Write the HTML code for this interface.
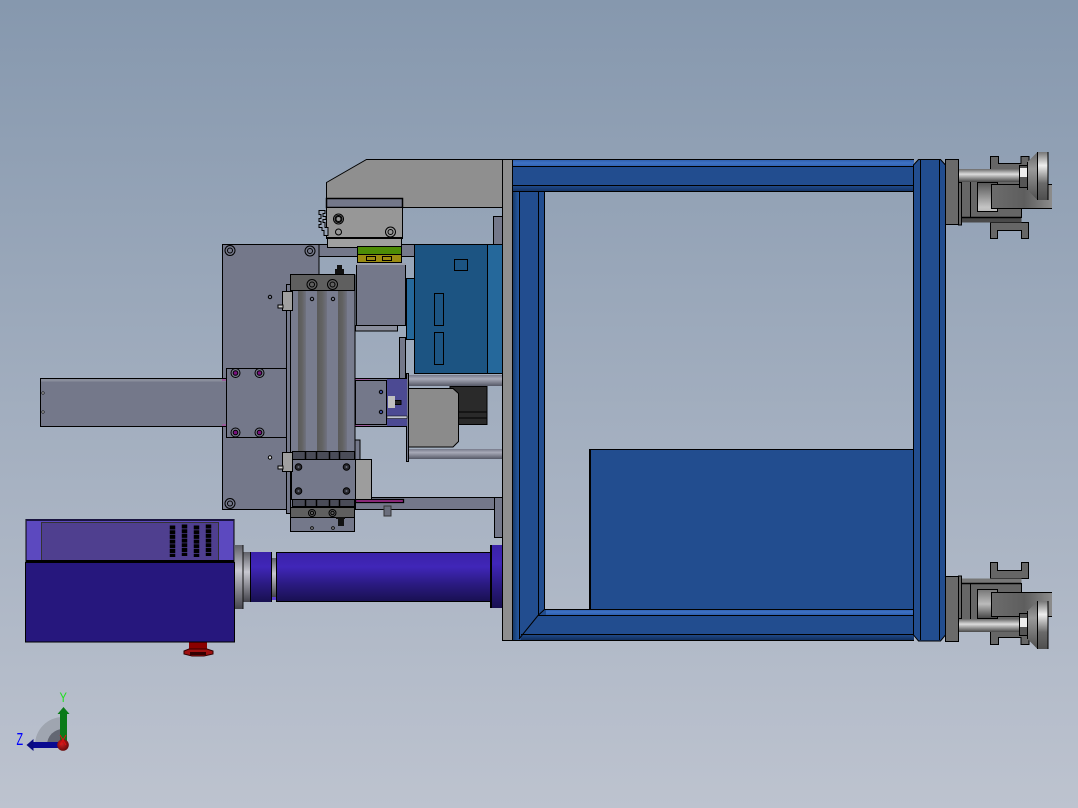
<!DOCTYPE html>
<html><head><meta charset="utf-8"><title>CAD</title>
<style>
html,body{margin:0;padding:0;width:1078px;height:808px;overflow:hidden;background:#a0abbc}
svg{display:block}
.k{stroke:#000;stroke-width:1}
text{font-family:"Liberation Sans",sans-serif}
</style></head><body>
<svg width="1078" height="808" viewBox="0 0 1078 808" xmlns="http://www.w3.org/2000/svg">
<defs>
<linearGradient id="bg" x1="0" y1="0" x2="0" y2="1"><stop offset="0" stop-color="#8698ae"/><stop offset="1" stop-color="#bdc3cf"/></linearGradient>
<linearGradient id="pur" x1="0" y1="0" x2="0" y2="1"><stop offset="0" stop-color="#3a22a8"/><stop offset=".3" stop-color="#4026b8"/><stop offset=".65" stop-color="#2a1a80"/><stop offset="1" stop-color="#181050"/></linearGradient>
<linearGradient id="rod" x1="0" y1="0" x2="0" y2="1"><stop offset="0" stop-color="#6a6a6a"/><stop offset=".4" stop-color="#dcdcdc"/><stop offset=".8" stop-color="#777"/><stop offset="1" stop-color="#484848"/></linearGradient>
<linearGradient id="rodF" x1="0" y1="1" x2="0" y2="0"><stop offset="0" stop-color="#6a6a6a"/><stop offset=".4" stop-color="#dcdcdc"/><stop offset=".8" stop-color="#777"/><stop offset="1" stop-color="#484848"/></linearGradient>
<linearGradient id="rod2" x1="0" y1="0" x2="0" y2="1"><stop offset="0" stop-color="#777a8a"/><stop offset=".35" stop-color="#a8aab8"/><stop offset="1" stop-color="#555866"/></linearGradient>
<linearGradient id="col" x1="0" y1="0" x2="0" y2="1"><stop offset="0" stop-color="#5f6068"/><stop offset=".4" stop-color="#c8c8d0"/><stop offset="1" stop-color="#44444c"/></linearGradient>
<linearGradient id="bt" x1="0" y1="0" x2="0" y2="1"><stop offset="0" stop-color="#2a5aa8"/><stop offset=".5" stop-color="#3f72c4"/><stop offset="1" stop-color="#2d5fae"/></linearGradient>
<linearGradient id="bd" x1="0" y1="0" x2="0" y2="1"><stop offset="0" stop-color="#224d8f"/><stop offset="1" stop-color="#12305e"/></linearGradient>
<linearGradient id="bl" x1="0" y1="0" x2="1" y2="0"><stop offset="0" stop-color="#14355f"/><stop offset="1" stop-color="#265aa5"/></linearGradient>
<linearGradient id="ch" x1="0" y1="0" x2="0" y2="1"><stop offset="0" stop-color="#555"/><stop offset=".85" stop-color="#c4c4c4"/><stop offset="1" stop-color="#bbb"/></linearGradient>
<linearGradient id="chF" x1="0" y1="0" x2="0" y2="1"><stop offset="0" stop-color="#444"/><stop offset=".5" stop-color="#bbb"/><stop offset="1" stop-color="#777"/></linearGradient>
<linearGradient id="blk" x1="0" y1="0" x2="1" y2="0"><stop offset="0" stop-color="#6c6c6c"/><stop offset=".55" stop-color="#5e5e5e"/><stop offset="1" stop-color="#8c8c8c"/></linearGradient>
<linearGradient id="fl" x1="0" y1="0" x2="0" y2="1"><stop offset="0" stop-color="#777"/><stop offset=".28" stop-color="#eee"/><stop offset=".65" stop-color="#6a6a6a"/><stop offset="1" stop-color="#4e4e4e"/></linearGradient>
<linearGradient id="flF" x1="0" y1="1" x2="0" y2="0"><stop offset="0" stop-color="#777"/><stop offset=".28" stop-color="#eee"/><stop offset=".65" stop-color="#6a6a6a"/><stop offset="1" stop-color="#4e4e4e"/></linearGradient>
<linearGradient id="cn" x1="0" y1="0" x2="0" y2="1"><stop offset="0" stop-color="#666"/><stop offset=".35" stop-color="#999"/><stop offset="1" stop-color="#4e4e4e"/></linearGradient>
<linearGradient id="cnF" x1="0" y1="1" x2="0" y2="0"><stop offset="0" stop-color="#666"/><stop offset=".35" stop-color="#999"/><stop offset="1" stop-color="#4e4e4e"/></linearGradient>
<linearGradient id="gr" x1="0" y1="0" x2="1" y2="0"><stop offset="0" stop-color="#5a5a5a"/><stop offset=".5" stop-color="#626262"/><stop offset="1" stop-color="#707280"/></linearGradient>
<radialGradient id="ball" cx=".4" cy=".4" r=".7"><stop offset="0" stop-color="#d02020"/><stop offset="1" stop-color="#5a0808"/></radialGradient>
<g id="scr"><circle r="5" fill="none" stroke="#000"/><circle r="2.500" fill="none" stroke="#000"/></g>
<g id="scp"><circle r="4.500" fill="none" stroke="#000"/><circle r="2.300" fill="#7a1080" stroke="#000"/></g>
<g id="scd"><circle r="3.300" fill="#2a2a30" stroke="#000"/><circle r="1" fill="#6a6e7c"/></g>
</defs>

<rect width="1078" height="808" fill="url(#bg)"/>

<!-- inner box -->
<rect x="590" y="449" width="324" height="161" fill="#224d8f"/>
<path d="M589.500 449.500H914" stroke="#000"/><rect x="589" y="449" width="2" height="161" fill="#000"/>

<!-- frame -->
<rect x="512" y="159" width="33" height="481" fill="#224d8f"/>
<rect x="512" y="159" width="7" height="481" fill="url(#bl)"/>
<line x1="519.500" y1="192" x2="519.500" y2="639" stroke="#000"/>
<line x1="538.500" y1="192" x2="538.500" y2="615" stroke="#000"/>
<line x1="544.500" y1="192" x2="544.500" y2="610" stroke="#000"/>
<rect x="512" y="159" width="402" height="8" fill="url(#bt)"/>
<rect x="512" y="167" width="402" height="18" fill="#224d8f"/>
<rect x="512" y="185" width="402" height="7" fill="url(#bd)"/>
<path d="M512 159.500H914M512 166.500H914M512 185.500H914M512 191.500H914" stroke="#000" fill="none"/>
<path d="M545 609 H914 V640 H512 L519 640 L538 615 L545 609z" fill="#224d8f"/>
<rect x="546" y="609" width="368" height="6" fill="url(#bt)"/>
<path d="M538 615.500H914" stroke="#000"/>
<rect x="521" y="634" width="393" height="6" fill="url(#bd)"/>
<path d="M521 634.500H914M512 640.500H914M545 609.500H914" stroke="#000"/>
<path d="M519 639L538 615.500L545 609" stroke="#000" fill="none"/>

<!-- right column -->
<path d="M913.500 165l5-5.500h22l5 5.500v470l-5 6h-22l-5-6z" fill="#224d8f" stroke="#000"/>
<path d="M920.500 160V640M939.500 160V640" stroke="#000"/>

<!-- foot top -->
<g>
 <path d="M990.500 156.500h8v7h22.500v-7h8v13h-38.500z" fill="#666" class="k"/>
 <path d="M990.500 238.500v-16h38v16h-7v-8h-24v8z" fill="#666" class="k"/>
 <rect x="958.500" y="180.500" width="63" height="37" fill="#666" class="k"/>
 <rect x="961" y="218" width="60.500" height="4.500" fill="#4a4a4a"/>
 <line x1="961" y1="217.500" x2="1021" y2="217.500" stroke="#000" stroke-width="1.500"/>
 <line x1="970.500" y1="182" x2="970.500" y2="218" stroke="#000"/>
 <rect x="977.500" y="182.500" width="20" height="29" fill="url(#ch)" class="k"/>
 <rect x="958" y="169" width="62" height="13" fill="url(#rod)"/>
 <rect x="958.500" y="182.500" width="3" height="42.500" fill="#666" class="k"/>
 <rect x="991" y="184" width="61" height="25" fill="url(#blk)"/>
 <path d="M1052 184.500H991.500V208.500H1052" fill="none" stroke="#000"/>
 <rect x="1019.500" y="165.500" width="8" height="22" fill="#555" class="k"/>
 <rect x="1020" y="168" width="7" height="9" fill="#eee"/>
 <path d="M1027.500 162l10-10v48l-10-10z" fill="url(#cn)"/>
 <rect x="1037.500" y="152" width="10.500" height="48" fill="url(#fl)"/>
 <path d="M1027.500 162V190M1037.500 152V200M1048 152V200" stroke="#000" fill="none"/>
 <rect x="945.500" y="159.500" width="13" height="65" fill="#6a6a6a" class="k"/>
</g>
<!-- foot bottom (mirrored) -->
<g transform="translate(0,801) scale(1,-1)">
 <path d="M990.500 156.500h8v7h22.500v-7h8v13h-38.500z" fill="#666" class="k"/>
 <path d="M990.500 238.500v-16h38v16h-7v-8h-24v8z" fill="#666" class="k"/>
 <rect x="958.500" y="180.500" width="63" height="37" fill="#666" class="k"/>
 <rect x="961" y="218" width="60.500" height="4.500" fill="#777"/>
 <line x1="961" y1="217.500" x2="1021" y2="217.500" stroke="#000" stroke-width="1.500"/>
 <line x1="970.500" y1="182" x2="970.500" y2="218" stroke="#000"/>
 <rect x="977.500" y="182.500" width="20" height="29" fill="url(#chF)" class="k"/>
 <rect x="958" y="169" width="62" height="13" fill="url(#rodF)"/>
 <rect x="958.500" y="182.500" width="3" height="42.500" fill="#666" class="k"/>
 <rect x="991" y="184" width="61" height="25" fill="url(#blk)"/>
 <path d="M1052 184.500H991.500V208.500H1052" fill="none" stroke="#000"/>
 <rect x="1019.500" y="165.500" width="8" height="22" fill="#555" class="k"/>
 <rect x="1020" y="174" width="7" height="9" fill="#eee"/>
 <path d="M1027.500 162l10-10v48l-10-10z" fill="url(#cnF)"/>
 <rect x="1037.500" y="152" width="10.500" height="48" fill="url(#flF)"/>
 <path d="M1027.500 162V190M1037.500 152V200M1048 152V200" stroke="#000" fill="none"/>
 <rect x="945.500" y="159.500" width="13" height="65" fill="#6a6a6a" class="k"/>
</g>

<!-- top bracket -->
<path d="M326.500 182.500L366.500 159.500H502.500V207.500H400V215H326.500z" fill="#8f8f8f" stroke="#000"/>
<rect x="493.500" y="216.500" width="9" height="28" fill="#74788a" stroke="#000"/>

<!-- back band -->
<rect x="319" y="244.500" width="96" height="12" fill="#74788a" stroke="#000"/>

<!-- base plate -->
<rect x="222.500" y="244.500" width="96.500" height="265" fill="#74788a" stroke="#000"/>
<rect x="300" y="440" width="60" height="69.500" fill="#74788a" stroke="#000"/>
<use href="#scr" x="230" y="250.500"/><use href="#scr" x="310" y="251"/><use href="#scr" x="230" y="503.500"/>
<circle cx="270" cy="297" r="1.700" fill="#74788a" stroke="#000"/>
<circle cx="270" cy="457.500" r="1.700" fill="#ddd" stroke="#000"/>

<!-- cylinder block -->
<rect x="326.500" y="198.500" width="76" height="9" fill="#74788a" stroke="#000" stroke-width="1.500"/>
<rect x="326.500" y="207.500" width="76" height="31" fill="#979797" stroke="#000"/>
<rect x="327.500" y="238.500" width="74" height="9" fill="#a0a0a0" stroke="#000"/>
<rect x="326" y="237" width="77" height="1.500" fill="#000"/>
<use href="#scr" x="338.500" y="219"/><circle cx="338.500" cy="219" r="3.500" fill="none" stroke="#000"/>
<circle cx="338.500" cy="232" r="3" fill="none" stroke="#000"/>
<use href="#scr" x="390.500" y="232"/>
<path d="M319 210.500h6v3h-2v3h3v3h-3v3h2v5h3v8h-4v-5h-2v-3h-3v-3h2v-3h-2v-3h2v-4h-2z" fill="#98a4b6" stroke="#000"/>

<!-- green / olive -->
<rect x="357.500" y="246.500" width="44" height="8" fill="#4d8c06" stroke="#000"/>
<rect x="357.500" y="254.500" width="44" height="8" fill="#9b8c12" stroke="#000"/>
<rect x="366.500" y="256.500" width="9" height="4" fill="none" stroke="#000"/>
<rect x="382.500" y="256.500" width="9" height="4" fill="none" stroke="#000"/>

<!-- gray block -->
<rect x="355.500" y="325.500" width="42" height="5.500" fill="#8a8e9c" stroke="#000"/>
<rect x="356.500" y="263.500" width="49" height="62" fill="#74788a" stroke="#000"/>
<rect x="356" y="263" width="50" height="2" fill="#9a9eac"/>

<!-- blue motor -->
<rect x="406.500" y="278.500" width="8" height="61" fill="#25689b" stroke="#000"/>
<rect x="414.500" y="244.500" width="73" height="129" fill="#1c5482" stroke="#000"/>
<rect x="487.500" y="244.500" width="15" height="129" fill="#25689b" stroke="#000"/>
<rect x="454.500" y="259.500" width="13" height="11" fill="#1c5482" stroke="#000"/>
<rect x="434.500" y="293.500" width="9" height="32" fill="#1c5482" stroke="#000"/>
<rect x="434.500" y="332.500" width="9" height="32" fill="#1c5482" stroke="#000"/>

<!-- vertical strip -->
<rect x="399.500" y="337.500" width="6" height="48" fill="#74788a" stroke="#000"/>

<!-- stepper -->
<rect x="450" y="386.500" width="37" height="38" fill="#2a2a2a" stroke="#000"/>
<path d="M459 412H487M459 418H487" stroke="#000"/>
<rect x="408" y="375" width="94" height="11" fill="url(#rod2)"/>
<rect x="408" y="449" width="94" height="10" fill="url(#rod2)"/>
<path d="M408.500 388.500H453l5.500 5v48l-5.500 5.500H408.500z" fill="#8b8b8b" stroke="#000"/>
<rect x="406.500" y="373.500" width="2" height="88" fill="#74788a" stroke="#000"/>

<!-- arm & right extension -->
<rect x="385" y="378" width="22" height="49" fill="#4c4a93"/>
<path d="M355 378.500H407M355 426.500H407" stroke="#000"/>
<rect x="355" y="379" width="15" height="2" fill="#9a5a9a"/>
<rect x="355" y="424" width="15" height="2" fill="#9a5a9a"/>
<rect x="370" y="379" width="17" height="2" fill="#74788a"/>
<rect x="370" y="424" width="17" height="2" fill="#74788a"/>
<rect x="387" y="416" width="20" height="2.500" fill="#c0c4d0" stroke="#000" stroke-width=".5"/>
<rect x="355.500" y="380.500" width="31" height="44" fill="#74788a" stroke="#000"/>
<circle cx="381" cy="392" r="1.700" fill="#4050a0" stroke="#000"/>
<circle cx="381" cy="412" r="1.700" fill="#4050a0" stroke="#000"/>
<rect x="388" y="396" width="7" height="12" fill="#c0c0c0"/>
<path d="M395 400.500h6v4h-6" fill="#222" stroke="#000"/>

<rect x="40.500" y="378.500" width="186" height="48" fill="#74788a" stroke="#000"/>
<rect x="41" y="379" width="185" height="2.500" fill="#8a8e9c"/>
<circle cx="43" cy="393" r="1.200" fill="#ccc" stroke="#000" stroke-width=".6"/>
<circle cx="43" cy="412" r="1.200" fill="#ccc" stroke="#000" stroke-width=".6"/>
<rect x="222" y="379" width="4" height="2" fill="#9a5a9a"/>
<rect x="222" y="424" width="4" height="2" fill="#9a5a9a"/>
<rect x="226.500" y="368.500" width="60" height="69" fill="#74788a" stroke="#000"/>
<use href="#scp" x="235.500" y="373"/><use href="#scp" x="259.500" y="373"/>
<use href="#scp" x="235.500" y="432.500"/><use href="#scp" x="259.500" y="432.500"/>

<!-- lower horizontal bar -->
<rect x="355.500" y="497.500" width="139" height="12" fill="#74788a" stroke="#000"/>
<rect x="494.500" y="497.500" width="8" height="40" fill="#74788a" stroke="#000"/>
<rect x="384" y="506" width="7" height="10" fill="#6a6e7c" stroke="#333"/>
<rect x="355.500" y="499.500" width="48" height="3" fill="#a0308c" stroke="#000" stroke-width="1.300"/>

<!-- linear rail -->
<rect x="286.500" y="284.500" width="4" height="229" fill="#74788a" stroke="#000"/>
<rect x="290.500" y="275" width="64.500" height="190" fill="#787c8e" stroke="#000"/>
<rect x="298" y="290" width="8" height="162" fill="url(#gr)"/>
<rect x="317" y="290" width="10" height="162" fill="url(#gr)"/>
<rect x="338" y="290" width="9" height="162" fill="url(#gr)"/>
<rect x="290.500" y="274.500" width="64" height="16" fill="#5f5f5f" stroke="#000"/>
<use href="#scr" x="312" y="284.500"/><use href="#scr" x="332.500" y="284.500"/>
<circle cx="312" cy="299" r="1.700" fill="none" stroke="#000"/><circle cx="333" cy="299" r="1.700" fill="none" stroke="#000"/>
<path d="M337 265h5v4h2v5h-9v-5h2z" fill="#111"/>
<rect x="282.500" y="291.500" width="10" height="19" fill="#a0a0a0" stroke="#000"/>
<rect x="278" y="305" width="5" height="3" fill="#ccc" stroke="#000"/>

<!-- lower carriage -->
<rect x="292.500" y="451.500" width="62" height="8" fill="#4a4c58" stroke="#000"/>
<path d="M305.500 452V459M316.500 452V459M329.500 452V459M339.500 452V459" stroke="#000" stroke-width="1.500"/>
<rect x="355.500" y="459.500" width="16" height="40" fill="#9d9d9d" stroke="#000"/>
<rect x="291.500" y="459.500" width="64" height="40" fill="#74788a" stroke="#000"/>
<use href="#scd" x="298.500" y="467"/><use href="#scd" x="346.500" y="467"/>
<use href="#scd" x="298.500" y="491"/><use href="#scd" x="346.500" y="491"/>
<rect x="292.500" y="499.500" width="62" height="7" fill="#4a4c58" stroke="#000"/>
<path d="M305.500 500V507M316.500 500V507M329.500 500V507M339.500 500V507" stroke="#000" stroke-width="1.500"/>
<rect x="290.500" y="507.500" width="64" height="10" fill="#5f5f5f" stroke="#000"/>
<rect x="290.500" y="517.500" width="64" height="14" fill="#74788a" stroke="#000"/>
<circle cx="312" cy="513" r="3.500" fill="none" stroke="#000"/><circle cx="312" cy="513" r="1.700" fill="none" stroke="#000"/>
<circle cx="332.500" cy="513" r="3.500" fill="none" stroke="#000"/><circle cx="332.500" cy="513" r="1.700" fill="none" stroke="#000"/>
<circle cx="312" cy="528" r="1.300" fill="#ddd" stroke="#000"/><circle cx="333" cy="528" r="1.300" fill="#ddd" stroke="#000"/>
<path d="M336 517h9v2h-1v7h-6v-7h-2z" fill="#111"/>
<rect x="282.500" y="452.500" width="10" height="19" fill="#a0a0a0" stroke="#000"/>
<rect x="278" y="466" width="5" height="3" fill="#ccc" stroke="#000"/>

<!-- main plate -->
<rect x="502.500" y="159.500" width="10" height="481" fill="#8f8f8f" stroke="#000"/>

<!-- purple cylinder -->
<rect x="490" y="545" width="12" height="63" fill="url(#pur)"/>
<rect x="490" y="545" width="2" height="63" fill="#000"/>
<rect x="276" y="552" width="214" height="50" fill="url(#pur)"/>
<path d="M276 552.500H490M276 601.500H490" stroke="#000"/>
<rect x="272" y="558" width="4" height="39" fill="url(#col)"/>
<rect x="272" y="597" width="4" height="3" fill="#5a40d0"/>
<rect x="250" y="552" width="22" height="50" fill="url(#pur)"/>
<path d="M250.500 552V602M271.500 552V602M276.500 552V602" stroke="#000"/>
<rect x="243" y="552" width="7" height="50" fill="url(#col)"/>
<rect x="235" y="545" width="8" height="64" fill="url(#col)"/>
<line x1="243" y1="545" x2="243" y2="609" stroke="#111"/>

<!-- red button -->
<rect x="189" y="642" width="18" height="8" fill="#8a0000"/>
<path d="M184 651l5-2h18l6 2v3l-9 2h-12l-8-2z" fill="#a01010" stroke="#300"/>
<rect x="190" y="652" width="16" height="3" fill="#300"/>

<!-- purple box -->
<rect x="25.500" y="562.500" width="209" height="79.500" fill="#26177d" stroke="#000"/>
<rect x="26" y="519.500" width="208" height="43" fill="#5c49bf" stroke="#000"/>
<rect x="41.500" y="522.500" width="177" height="38" fill="#4f3f8f" stroke="#333"/>
<rect x="26" y="560" width="208" height="3" fill="#000"/>
<rect x="26" y="519" width="208" height="2" fill="#1a1440"/>
<path d="M172.500 525.500V557M184.500 524.500V556M196.500 525.500V557M208.500 524.500V556" stroke="#000" stroke-width="5.500" stroke-dasharray="4 .7"/>

<!-- triad -->
<path d="M35 745A28 28 0 0 1 63 717V745z" fill="#9fa5b0"/>
<path d="M47 745A16 16 0 0 1 63 729V745z" fill="#636773"/>
<rect x="33" y="742" width="27" height="6" fill="#0a0a90"/>
<path d="M26.500 745l7-6v12z" fill="#0a0a80"/>
<rect x="60" y="713" width="7" height="30" fill="#0a7a18"/>
<path d="M63.500 707l6 7h-12z" fill="#0a7a18"/>
<circle cx="63" cy="745" r="5.800" fill="url(#ball)"/>
<path d="M60 735l6 10M66 735l-6 10" stroke="#e01010" fill="none"/>
<text x="0" y="0" font-size="16" fill="#20e020" transform="translate(59.500 702) scale(.7 .85)">Y</text>
<text x="0" y="0" font-size="18" fill="#0000ff" transform="translate(16.500 745) scale(.6 1)">Z</text>
</svg>
</body></html>
